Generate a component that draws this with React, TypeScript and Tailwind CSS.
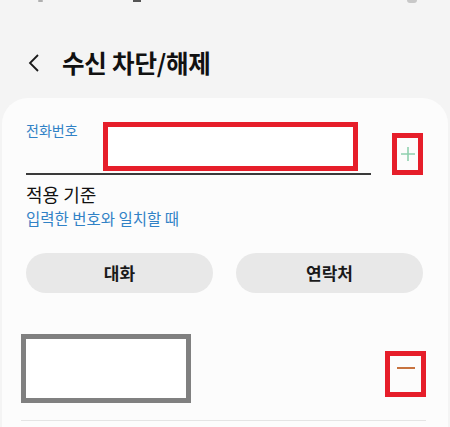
const font = { fontFamily: '"Noto Sans CJK KR", "Noto Sans", sans-serif' };

export default function App() {
  return (
    <div className="w-[450px] h-[427px] overflow-hidden bg-[#f4f4f4] flex flex-col" style={font}>
      {/* status bar remnants */}
      <div className="h-[4px] relative">
        <div className="absolute left-[38px] top-0 w-[5px] h-[2px] rounded-full bg-[#b0b0b0]" />
        <div className="absolute left-[133px] top-0 w-[8px] h-[2px] bg-[#555]" />
        <div className="absolute left-[407px] top-0 w-[10px] h-[3px] rounded-b-full bg-[#c8c8c8]" />
      </div>

      {/* header */}
      <div className="flex items-center h-[44px] mt-[37px] pl-[27px]">
        <svg width="14" height="20" viewBox="0 0 14 20" className="shrink-0">
          <path d="M11 2 L3 10 L11 18" fill="none" stroke="#1a1a1a" strokeWidth="1.8" />
        </svg>
        <h1 className="ml-[21px] text-[24.5px] font-bold text-[#111] tracking-[-0.2px] leading-none">수신 차단/해제</h1>
      </div>

      {/* card */}
      <div className="mt-[13px] mx-[2px] flex-1 rounded-t-[26px] bg-[#fcfcfc] pl-[24px] pr-[22px] pt-[24px]">
        <div className="flex items-end">
          <div className="w-[345px]">
            <div className="flex items-start">
              <span className="text-[14px] leading-[17px] text-[#3182c6]">전화번호</span>
              <div className="ml-[25px] w-[255px] h-[49px] border-[5px] border-[#e61e2a] bg-white" />
            </div>
            <div className="h-[2px] bg-[#3a3a3a] mt-[2px]" />
          </div>
          <div className="ml-[21px] w-[31px] h-[42px] border-[5px] border-[#e61e2a] flex items-center justify-center">
            <svg width="16" height="16" viewBox="0 0 16 16">
              <path d="M8 1 V15 M1 8 H15" stroke="#8fd0ae" strokeWidth="1.6" />
            </svg>
          </div>
        </div>

        <div className="mt-[6px] text-[18px] leading-[26px] text-[#111]">적용 기준</div>
        <div className="mt-[1px] text-[15.5px] leading-[20px] text-[#3182c6]">입력한 번호와 일치할 때</div>

        <div className="mt-[25px] flex gap-[23px] pr-[3px]">
          <button className="flex-1 h-[40px] rounded-full bg-[#e8e8e8] text-[17px] font-bold text-[#1a1a1a]">대화</button>
          <button className="flex-1 h-[40px] rounded-full bg-[#e8e8e8] text-[17px] font-bold text-[#1a1a1a]">연락처</button>
        </div>

        <div className="mt-[41px] -ml-[5px] flex items-start justify-between">
          <div className="w-[170px] h-[69px] border-[5px] border-[#808080] bg-white" />
          <div className="mt-[17px] w-[41px] h-[46px] border-[5px] border-[#e61e2a] flex items-center justify-center">
            <div className="w-[18px] h-[2px] bg-[#c7733f] -mt-[12px]" />
          </div>
        </div>
        <div className="mt-[17px] -ml-[5px] h-[1px] bg-[#e4e4e4]" />
      </div>
    </div>
  );
}
